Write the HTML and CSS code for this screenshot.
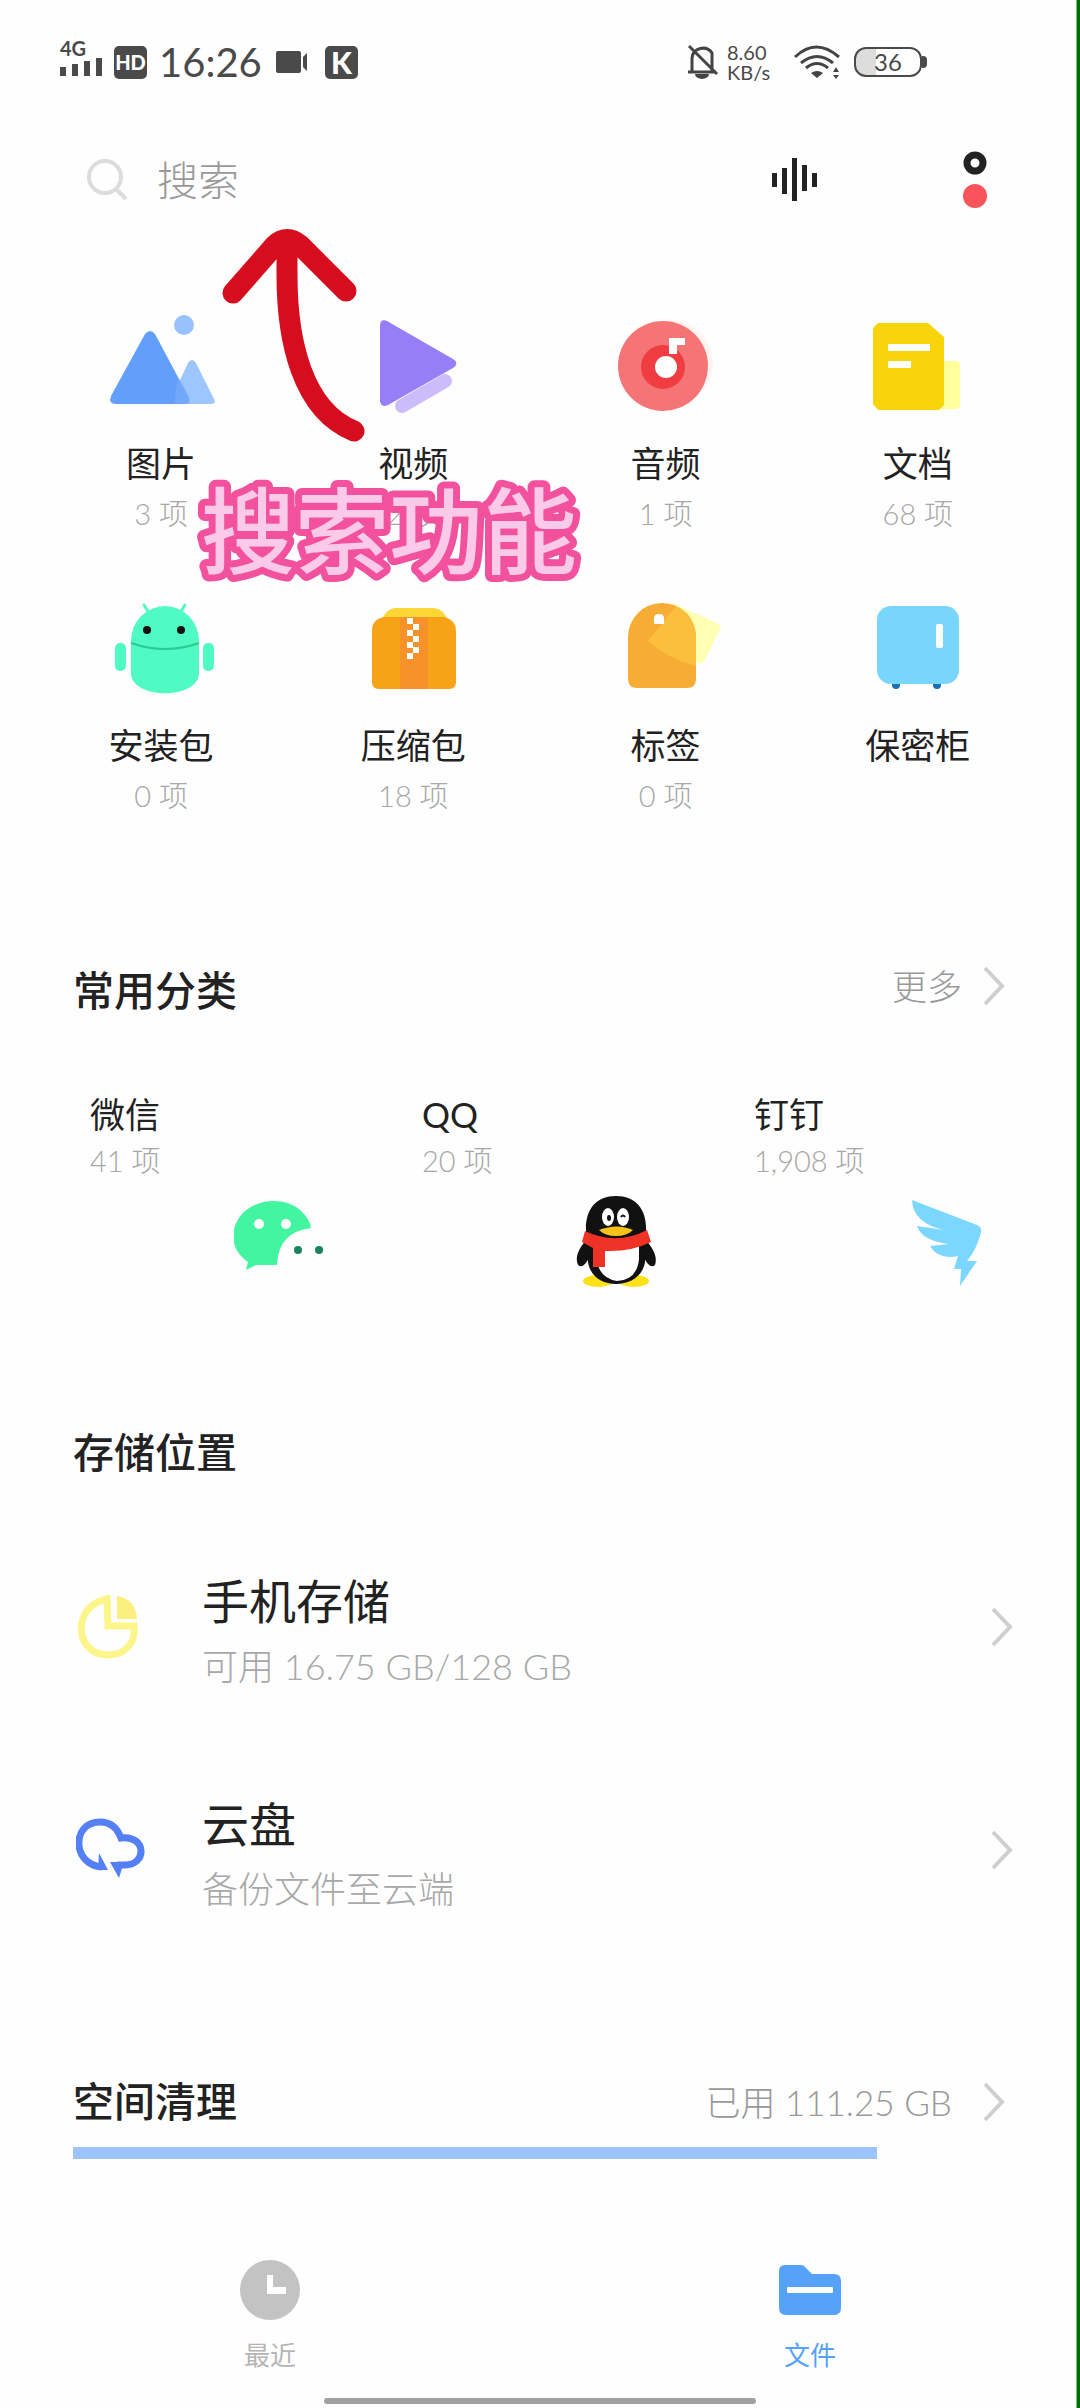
FILE: index.html
```html
<!DOCTYPE html>
<html lang="zh-CN">

<head>
    <meta charset="UTF-8">
    <meta name="viewport" content="width=device-width, initial-scale=1.0">
    <title>文件管理</title>
    <link rel="stylesheet" href="styles.css">
</head>

<body>
    <div class="status-bar">
        <div class="network">
            <span>4G</span>
            <svg width="42" height="20" viewBox="0 0 42 20" fill="#4a4a4a">
                <rect x="0" y="11" width="6" height="9" />
                <rect x="12" y="8" width="6" height="12" />
                <rect x="24" y="5" width="6" height="15" />
                <rect x="36" y="2" width="6" height="18" />
            </svg>
        </div>
        <span class="badge badge-hd">HD</span>
        <span class="time">16:26</span>
        <svg class="camera" width="34" height="24" viewBox="0 0 34 24" fill="#4a4a4a">
            <rect x="1" y="1" width="25" height="22" rx="2" />
            <path d="M28 7l4-4v18l-4-4z" />
        </svg>
        <span class="badge badge-k">K</span>
        <div class="status-right">
            <svg width="32" height="38" viewBox="0 0 32 38" fill="none" stroke="#444" stroke-width="3">
                <path d="M5 29V15a11 11 0 0 1 20 -5v19M1 29h28M2 3l28 28" />
                <path d="M8 31h14a7 5 0 0 1-14 0z" fill="#444" stroke="none" />
            </svg>
            <div class="speed"><span>8.60</span><span>KB/s</span></div>
            <svg class="wifi" width="50" height="36" viewBox="0 0 50 36" fill="none" stroke="#444" stroke-width="3">
                <path d="M2 13q21-20 44 0M8 19q16-13 32 0M13 24q11-9 22 0" />
                <path d="M18 29q6-4 12 0l-6 5z" fill="#444" stroke="none" />
                <path d="M43 23l3 5h-6zM40 31h6l-3 4z" fill="#444" stroke="none" />
            </svg>
            <div class="battery"><div class="battery-body">36</div></div>
        </div>
    </div>

    <form class="search">
        <svg width="42" height="42" viewBox="0 0 42 42" fill="none" stroke="#dcdcdc" stroke-width="4">
            <circle cx="18" cy="18" r="16" />
            <path d="M29 30l10 10" />
        </svg>
        <input type="search" placeholder="搜索" aria-label="搜索">
        <button type="button" class="icon-btn" aria-label="语音">
            <svg width="48" height="44" viewBox="0 0 48 44" fill="#222">
                <rect x="1" y="15" width="5" height="14" />
                <rect x="11" y="10" width="5" height="26" />
                <rect x="21" y="0" width="5" height="43" />
                <rect x="31" y="7" width="5" height="26" />
                <rect x="41" y="15" width="5" height="14" />
            </svg>
        </button>
        <button type="button" class="icon-btn menu-btn" aria-label="菜单">
            <svg width="26" height="60" viewBox="0 0 26 60">
                <circle cx="13" cy="13" r="8" fill="none" stroke="#222" stroke-width="7" />
                <circle cx="13" cy="46" r="12" fill="#f9545c" />
            </svg>
        </button>
    </form>

    <main>
        <section class="types">
            <button type="button" class="type">
                <svg viewBox="0 0 120 110">
                    <circle cx="83" cy="15" r="10" fill="#97c2fd" />
                    <path d="M87 53q4-6 8 0l18 36q3 5-4 5H68z" fill="#9dc6fc" />
                    <path d="M44 24q5-6 10 0l33 62q4 8-4 8H15q-8 0-5-8z" fill="#629ffa" />
                    <path d="M77 67l12 20v7H73z" fill="#7fb1f9" opacity=".5" />
                </svg>
                <span class="name">图片</span>
                <span class="count">3 项</span>
            </button>
            <button type="button" class="type">
                <svg viewBox="0 0 120 110">
                    <path d="M49 96L92 71" stroke="#cdbcfc" stroke-width="14" stroke-linecap="round" />
                    <path d="M27 16q0-8 7-5l66 38q7 4 0 9L35 95q-7 3-8-4z" fill="#967ff6" />
                </svg>
                <span class="name">视频</span>
                <span class="count">2 项</span>
            </button>
            <button type="button" class="type">
                <svg viewBox="0 0 120 110">
                    <circle cx="64" cy="53" r="43" fill="#fff4ef" />
                    <circle cx="57" cy="56" r="45" fill="#f57576" />
                    <circle cx="57" cy="57" r="22" fill="#f03d41" />
                    <circle cx="60" cy="57" r="11" fill="#fff" />
                    <path d="M63 28h16v7h-8v9h-8z" fill="#fff" />
                </svg>
                <span class="name">音频</span>
                <span class="count">1 项</span>
            </button>
            <button type="button" class="type">
                <svg viewBox="0 0 120 110">
                    <path d="M80 51h18q4 0 4 5v38q0 5-5 5H80z" fill="#ffff9e" />
                    <path d="M20 13h50l16 14v68l-5 5H20l-5-6V18z" fill="#f8d40a" />
                    <path d="M30 34h42v7H30zM30 51h23v7H30z" fill="#fff" />
                </svg>
                <span class="name">文档</span>
                <span class="count">68 项</span>
            </button>
            <button type="button" class="type">
                <svg viewBox="0 0 120 110">
                    <path d="M43 13l5 8M84 13l-5 8" stroke="#50fbc3" stroke-width="3" stroke-linecap="round" />
                    <path d="M30 49a34 35 0 0 1 68 0v32c0 27-68 27-68 0z" fill="#50fbc3" />
                    <path d="M30 51q34 12 68 0" fill="none" stroke="#2cc994" stroke-width="2" />
                    <circle cx="46" cy="38" r="4" fill="#111" />
                    <circle cx="80" cy="38" r="4" fill="#111" />
                    <rect x="14" y="51" width="11" height="28" rx="5" fill="#50fbc3" />
                    <rect x="102" y="51" width="11" height="28" rx="5" fill="#50fbc3" />
                </svg>
                <span class="name">安装包</span>
                <span class="count">0 项</span>
            </button>
            <button type="button" class="type">
                <svg viewBox="0 0 120 110">
                    <path d="M28 30q5-14 15-14h36q12 0 16 14z" fill="#fcd634" />
                    <path d="M31 25h60q12 3 12 14v51q0 7-7 7H26q-7 0-7-7V39q0-12 12-14z" fill="#f6a318" />
                    <rect x="47" y="25" width="28" height="72" fill="#f7922a" />
                    <path d="M54 26h6v6h-6zM60 32h6v6h-6zM54 38h6v6h-6zM60 44h6v6h-6zM54 50h6v6h-6zM60 55h6v6h-6zM54 61h6v6h-6z" fill="#fff" />
                </svg>
                <span class="name">压缩包</span>
                <span class="count">18 项</span>
            </button>
            <button type="button" class="type">
                <svg viewBox="0 0 120 110">
                    <path d="M66 11l47 21q3 2 1 5l-15 31q-2 4-6 3L50 50z" fill="#ffffb4" />
                    <path d="M22 45a34 34 0 0 1 68 0v42q0 9-9 9H31q-9 0-9-9z" fill="#f7ad35" />
                    <path d="M70 14q19 9 20 31v29Q62 67 42 49z" fill="#fabf3c" />
                    <path d="M48 32v-6q0-4 5-4t5 4v6z" fill="#fff" />
                </svg>
                <span class="name">标签</span>
                <span class="count">0 项</span>
            </button>
            <button type="button" class="type">
                <svg viewBox="0 0 120 110">
                    <circle cx="38" cy="93" r="4" fill="#1b6fb5" />
                    <circle cx="79" cy="93" r="4" fill="#1b6fb5" />
                    <rect x="19" y="14" width="82" height="78" rx="14" fill="#78d6fd" />
                    <rect x="78" y="32" width="7" height="24" rx="2" fill="#fff" />
                </svg>
                <span class="name">保密柜</span>
            </button>
        </section>

        <section class="common">
            <div class="section-head">
                <h2>常用分类</h2>
                <a href="#" class="more">更多
                    <svg class="chevron" viewBox="0 0 24 40"><path d="M3 2l17 18L3 38" /></svg>
                </a>
            </div>
            <div class="apps">
                <a href="#" class="app">
                    <span class="name">微信</span>
                    <span class="count">41 项</span>
                    <svg viewBox="0 0 100 100">
                        <path d="M14 68C-4 56-5 35 8 20C23 4 51 3 66 16Q76 25 77 34Q44 38 43 71H22l-10 5z" fill="#43f5a1" />
                        <circle cx="25" cy="30" r="5" fill="#fff" />
                        <circle cx="52" cy="30" r="5" fill="#fff" />
                        <circle cx="64" cy="56" r="4" fill="#17845d" />
                        <circle cx="85" cy="56" r="4" fill="#17845d" />
                    </svg>
                </a>
                <a href="#" class="app">
                    <span class="name">QQ</span>
                    <span class="count">20 项</span>
                    <svg viewBox="0 0 100 100">
                        <ellipse cx="32" cy="87" rx="15" ry="6" fill="#ffe119" />
                        <ellipse cx="68" cy="87" rx="15" ry="6" fill="#ffe119" />
                        <path d="M22 44Q7 60 12 71q5 5 12-9zM78 44q15 16 11 27q-5 5-12-9z" fill="#111" />
                        <path d="M50 2c-20 0-31 14-30 35L22 68c2 14 14 22 28 22s27-8 29-22l1-31C81 16 70 2 50 2z" fill="#111" />
                        <path d="M35 50h38v15q-2 21-22 22Q33 84 31 66z" fill="#fff" />
                        <path d="M19 37q31 15 62-1l4 12q-20 10-46 9v16H27V54l-11-6z" fill="#ee3225" />
                        <path d="M33 36q18-7 34 0q-6 6-17 6t-17-6z" fill="#f5c21a" />
                        <ellipse cx="42" cy="23" rx="6" ry="9" fill="#fff" />
                        <ellipse cx="57" cy="23" rx="6" ry="9" fill="#fff" />
                        <ellipse cx="43" cy="24" rx="2" ry="3" fill="#111" />
                        <path d="M55 23q2-3 4 0" fill="none" stroke="#111" stroke-width="2" />
                    </svg>
                </a>
                <a href="#" class="app">
                    <span class="name">钉钉</span>
                    <span class="count">1,908 项</span>
                    <svg viewBox="0 0 100 100">
                        <path d="M14 6l65 25q5 2 4 7-4 17-14 29h10L62 92l1-17h-7l4-13q-20 4-28-10l19-2Q24 47 19 32l27 4Q15 29 14 6z" fill="#7bd7ff" />
                    </svg>
                </a>
            </div>
        </section>

        <section class="storage">
            <h2>存储位置</h2>
            <a href="#" class="place">
                <svg class="place-icon" viewBox="0 0 72 66" fill="none" stroke="#fcf68a" stroke-width="7">
                    <path d="M31 6C-5 13-2 62 32 62c19 0 28-14 26-29H32z" />
                    <path d="M41 3q19 3 20 23H41z" fill="#fbf07e" stroke="none" />
                </svg>
                <span class="place-text">
                    <span class="place-name">手机存储</span>
                    <span class="place-info">可用 16.75 GB/128 GB</span>
                </span>
                <svg class="chevron" viewBox="0 0 24 40"><path d="M3 2l17 18L3 38" /></svg>
            </a>
            <a href="#" class="place">
                <svg class="place-icon" viewBox="0 0 72 66" fill="none" stroke="#557ff5" stroke-width="7">
                    <path d="M26 51C-4 49-5 6 24 6q15 0 21 16c26-3 26 27 4 27H41" />
                    <path d="M23 37l9 17H22zM34 46h14l-5 16z" fill="#557ff5" stroke="none" />
                </svg>
                <span class="place-text">
                    <span class="place-name">云盘</span>
                    <span class="place-info">备份文件至云端</span>
                </span>
                <svg class="chevron" viewBox="0 0 24 40"><path d="M3 2l17 18L3 38" /></svg>
            </a>
        </section>

        <section class="clean">
            <div class="section-head">
                <h2>空间清理</h2>
                <a href="#" class="more">已用 111.25 GB
                    <svg class="chevron" viewBox="0 0 24 40"><path d="M3 2l17 18L3 38" /></svg>
                </a>
            </div>
            <div class="usage"><div class="usage-fill" style="width: 86%"></div></div>
        </section>
    </main>

    <nav class="tabs">
        <a href="#" class="tab">
            <svg viewBox="0 0 64 60">
                <circle cx="32" cy="30" r="30" fill="#c3c3c3" />
                <path d="M29 15h6v12h13v7H29z" fill="#fff" />
            </svg>
            最近
        </a>
        <a href="#" class="tab active">
            <svg viewBox="0 0 64 60">
                <path d="M1 11q0-6 6-6h16q3 0 5 3l6 6h22q7 0 7 7v27q0 7-7 7H8q-7 0-7-7z" fill="#57a2f9" />
                <rect x="9" y="27" width="46" height="6" rx="1" fill="#fff" />
            </svg>
            文件
        </a>
    </nav>
    <div class="home-bar"></div>

    <!-- tutorial note over the page -->
    <svg class="note-arrow" viewBox="0 0 160 230">
        <path d="M13 73L55 25Q67 14 80 25L126 71" />
        <path d="M67 24V55C67 120 82 190 134 211" />
    </svg>
    <svg class="note-text" viewBox="0 0 400 120">
        <text x="12" y="96">搜索功能</text>
    </svg>
    <div class="edge"></div>
</body>

</html>
```
FILE: styles.css
```css
* {
    box-sizing: border-box;
}

body {
    position: relative;
    display: flex;
    flex-direction: column;
    min-height: 100vh;
    margin: 0;
    background: #fefefe;
    color: #222;
    font-family: Lato, "Noto Sans CJK SC", sans-serif;
    font-size: 35px;
}

a {
    color: inherit;
    text-decoration: none;
}

button {
    padding: 0;
    border: none;
    background: none;
    color: inherit;
    font: inherit;
}

svg {
    flex: none;
}

h2 {
    margin: 0;
    font-size: 41px;
    line-height: 60px;
    font-weight: 500;
}

/* status bar */
.status-bar {
    display: flex;
    align-items: center;
    height: 44px;
    margin: 40px 153px 0 60px;
    color: #4a4a4a;
}

.network {
    display: flex;
    flex-direction: column;
    width: 42px;
    margin-right: 12px;
    padding-bottom: 8px;
    font-size: 20px;
    line-height: 16px;
    font-weight: bold;
}

.badge {
    width: 33px;
    height: 33px;
    border-radius: 5px;
    background: #4a4a4a;
    color: #fff;
    font-weight: 900;
    line-height: 33px;
    text-align: center;
}

.badge-hd {
    font-size: 20px;
}

.badge-k {
    font-size: 30px;
}

.time {
    width: 128px;
    padding-left: 12px;
    font-size: 40px;
    line-height: 44px;
}

.camera {
    margin-right: 16px;
}

.status-right {
    display: flex;
    align-items: center;
    margin-left: auto;
}

.speed {
    display: flex;
    flex-direction: column;
    width: 44px;
    margin: 0 22px 0 8px;
    font-size: 20px;
    line-height: 20px;
}

.wifi {
    margin-right: 11px;
}

.battery {
    display: flex;
    align-items: center;
}

.battery::after {
    content: "";
    width: 5px;
    height: 12px;
    border-radius: 0 4px 4px 0;
    background: #4a4a4a;
}

.battery-body {
    width: 68px;
    height: 30px;
    border: 2px solid #4a4a4a;
    border-radius: 12px;
    background: linear-gradient(to right, #ddd 32%, #fff 32%);
    font-size: 24px;
    line-height: 26px;
    text-align: center;
}

/* search */
.search {
    display: flex;
    align-items: center;
    height: 80px;
    margin: 56px 90px 0 87px;
}

.search input {
    flex: 1;
    min-width: 0;
    margin-left: 28px;
    padding: 0;
    border: none;
    outline: none;
    background: none;
    font: inherit;
    font-size: 41px;
}

.search input::placeholder {
    color: #999;
    font-weight: 300;
}

.icon-btn {
    display: flex;
}

.menu-btn {
    margin: 0 2px 0 143px;
}

/* file types */
.types {
    display: grid;
    grid-template-columns: repeat(4, 1fr);
    row-gap: 58px;
    margin: 90px 36px 0 35px;
}

.type {
    display: flex;
    flex-direction: column;
    align-items: center;
    height: 224px;
}

.type svg {
    width: 120px;
    height: 110px;
    margin-bottom: 19px;
}

.type .name {
    line-height: 48px;
}

.count {
    color: #a8a8a8;
    font-size: 29px;
    font-weight: 300;
    line-height: 40px;
}

.type .count {
    margin-top: 7px;
}

/* sections */
.section-head {
    display: flex;
    justify-content: space-between;
    align-items: center;
}

.common,
.storage,
.clean {
    padding: 0 72px 0 73px;
}

.common {
    margin-top: 145px;
}

.more {
    display: flex;
    align-items: center;
    gap: 30px;
    color: #999;
    font-size: 35px;
    font-weight: 300;
    line-height: 60px;
}

.common .more {
    gap: 20px;
    height: 60px;
    padding-bottom: 10px;
}

.chevron {
    width: 24px;
    height: 40px;
    margin-right: 2px;
    fill: none;
    stroke: #cfcfcf;
    stroke-width: 4;
}

.apps {
    display: grid;
    grid-template-columns: repeat(3, 1fr);
    column-gap: 88px;
    margin: 73px 10px 0 17px;
}

.app {
    display: flex;
    flex-direction: column;
}

.app .name {
    line-height: 40px;
}

.app .count {
    margin-top: 7px;
}

.app svg {
    width: 100px;
    height: 100px;
    margin-top: 13px;
    align-self: flex-end;
}

.storage {
    margin-top: 129px;
}

.place {
    display: flex;
    align-items: flex-start;
    height: 120px;
    margin: 88px -10px 0 0;
}

.place + .place {
    margin-top: 103px;
}

.place-icon {
    width: 72px;
    height: 66px;
    margin: 22px 54px 0 3px;
}

.place .chevron {
    margin: 36px 4px 0 0;
}

.place-text {
    display: flex;
    flex: 1;
    flex-direction: column;
    gap: 10px;
}

.place-name {
    font-size: 47px;
    line-height: 60px;
}

.place-info {
    color: #a8a8a8;
    font-size: 36px;
    font-weight: 300;
    line-height: 50px;
}

.clean {
    margin-top: 158px;
}

.usage {
    margin-top: 15px;
}

.usage-fill {
    height: 12px;
    background: #9cc3fb;
}

/* bottom tabs */
.tabs {
    display: flex;
    margin-top: auto;
}

.tab {
    display: flex;
    flex: 1;
    flex-direction: column;
    align-items: center;
    gap: 17px;
    color: #b5b5b5;
    font-size: 26px;
    line-height: 36px;
}

.tab svg {
    width: 64px;
    height: 60px;
}

.tab.active {
    color: #57a2f9;
}

.home-bar {
    width: 40%;
    height: 6px;
    margin: 25px auto 4px;
    border-radius: 3px;
    background: #a0a0a0;
}

/* note drawn over the page */
.note-arrow {
    position: absolute;
    top: 220px;
    left: 220px;
    width: 160px;
    height: 230px;
    fill: none;
    stroke: #d60d1e;
    stroke-width: 21;
    stroke-linecap: round;
    stroke-linejoin: round;
}

.note-text {
    position: absolute;
    top: 471px;
    left: 189px;
    width: 400px;
    height: 120px;
    fill: #fccae9;
    stroke: #f2529d;
    stroke-width: 14;
    stroke-linejoin: round;
    paint-order: stroke fill;
    font-size: 94px;
    font-weight: 500;
}

.edge {
    position: absolute;
    top: 0;
    right: 0;
    bottom: 0;
    width: 4px;
    border-left: 1px solid #7cc47c;
    background: #006f00;
}
```
